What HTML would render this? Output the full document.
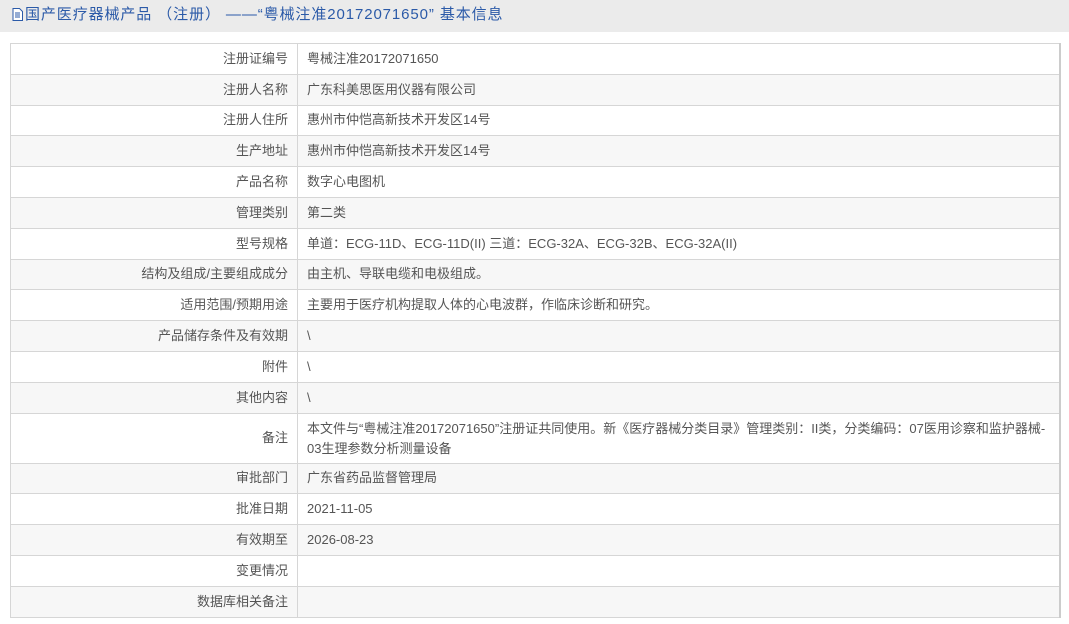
<!DOCTYPE html>
<html><head><meta charset="utf-8"><style>
body{margin:0;background:#fff;font-family:"Liberation Sans","Noto Sans CJK SC",sans-serif;width:1069px;height:624px;overflow:hidden}
.hd{height:32px;background:#ebebeb;color:#2b5aa8;font-size:15px;line-height:30px;padding-left:12px;white-space:nowrap;letter-spacing:0.9px}
.hd svg{vertical-align:-2px;margin-right:2px}
table{position:absolute;left:10px;top:43px;width:1051px;border-collapse:collapse;font-size:13px;color:#555;border:1px solid #ccc;border-right:2px solid #ccc}
td{border:1px solid #d6d6d6;padding:0 9px;height:29.8px;line-height:20px}
td.l{width:268px;text-align:right}
tr:nth-child(even){background:#f7f7f7}
</style></head><body>
<div class="hd"><svg width="11" height="13" viewBox="0 0 11 13"><path d="M1 .5h6.5l3 3v9h-9.5z" fill="#fff" stroke="#2b5aa8"/><path d="M3 5h5M3 7h5M3 9h5" stroke="#2b5aa8"/></svg>国产医疗器械产品 （注册） ——“粤械注准20172071650” 基本信息</div>
<table>
<tr><td class="l">注册证编号</td><td>粤械注准20172071650</td></tr>
<tr><td class="l">注册人名称</td><td>广东科美思医用仪器有限公司</td></tr>
<tr><td class="l">注册人住所</td><td>惠州市仲恺高新技术开发区14号</td></tr>
<tr><td class="l">生产地址</td><td>惠州市仲恺高新技术开发区14号</td></tr>
<tr><td class="l">产品名称</td><td>数字心电图机</td></tr>
<tr><td class="l">管理类别</td><td>第二类</td></tr>
<tr><td class="l">型号规格</td><td>单道：ECG-11D、ECG-11D(II) 三道：ECG-32A、ECG-32B、ECG-32A(II)</td></tr>
<tr><td class="l">结构及组成/主要组成成分</td><td>由主机、导联电缆和电极组成。</td></tr>
<tr><td class="l">适用范围/预期用途</td><td>主要用于医疗机构提取人体的心电波群，作临床诊断和研究。</td></tr>
<tr><td class="l">产品储存条件及有效期</td><td>\</td></tr>
<tr><td class="l">附件</td><td>\</td></tr>
<tr><td class="l">其他内容</td><td>\</td></tr>
<tr><td class="l" style="height:49px">备注</td><td style="padding-top:1px;white-space:nowrap">本文件与“粤械注准20172071650”注册证共同使用。新《医疗器械分类目录》管理类别：II类，分类编码：07医用诊察和监护器械-<br>03生理参数分析测量设备</td></tr>
<tr><td class="l">审批部门</td><td>广东省药品监督管理局</td></tr>
<tr><td class="l">批准日期</td><td>2021-11-05</td></tr>
<tr><td class="l">有效期至</td><td>2026-08-23</td></tr>
<tr><td class="l">变更情况</td><td></td></tr>
<tr><td class="l">数据库相关备注</td><td></td></tr>
</table>
</body></html>
